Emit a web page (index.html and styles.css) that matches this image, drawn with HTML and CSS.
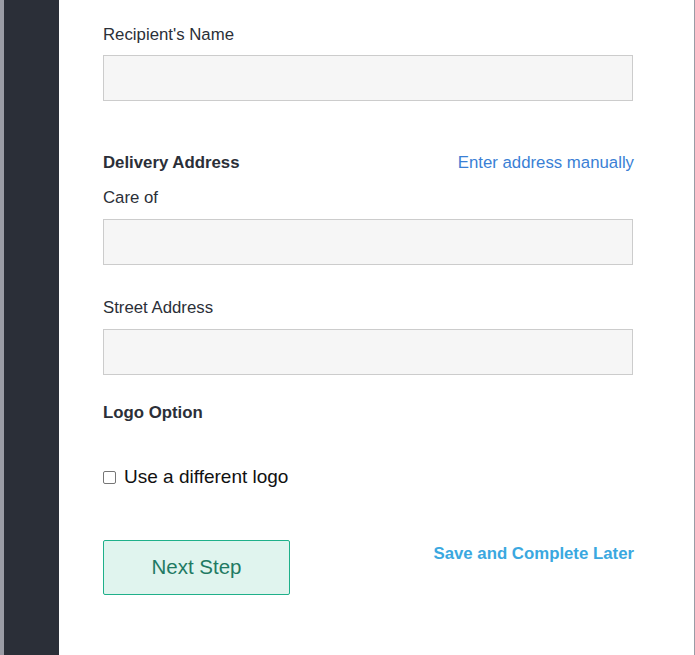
FILE: index.html
```html
<!DOCTYPE html>
<html>
<head>
<meta charset="utf-8">
<link rel="stylesheet" href="styles.css">
</head>
<body>
<div class="page">
  <div class="rail"></div>
  <div class="sidebar"></div>
  <main class="main">
    <form class="form">
      <label class="label lbl-name">Recipient's Name</label>
      <div class="input"></div>

      <div class="section-row">
        <span class="section-title">Delivery Address</span>
        <a class="link">Enter address manually</a>
      </div>
      <label class="label lbl-care">Care of</label>
      <div class="input"></div>

      <label class="label lbl-street">Street Address</label>
      <div class="input"></div>

      <div class="section-title logo-title">Logo Option</div>

      <label class="check-row">
        <span class="checkbox"></span>
        <span class="check-text">Use a different logo</span>
      </label>

      <div class="actions">
        <button type="button" class="btn-next">Next Step</button>
        <a class="save-link">Save and Complete Later</a>
      </div>
    </form>
  </main>
</div>
</body>
</html>
```
FILE: styles.css
```css
* { box-sizing: border-box; }
html, body { margin: 0; padding: 0; height: 100%; }
body {
  font-family: "Liberation Sans", Arial, sans-serif;
  color: #2b2f38;
  background: #fff;
}
.page {
  display: flex;
  height: 655px;
  border-right: 1px solid #9a9ca5;
}
.rail { width: 4px; background: #9a9ca5; }
.sidebar { width: 55px; background: #2b2f38; }
.main { flex: 1; padding-left: 44px; }
.form { width: 531px; display: flex; flex-direction: column; }
.label {
  display: block;
  font-size: 16.8px;
  line-height: 20px;
  padding-top: 1px;
  color: #2b2f38;
  margin-bottom: 10px;
}
.lbl-name { margin-top: 24px; }
.lbl-care { margin-top: 14px; }
.lbl-street { margin-top: 32px; }
.input {
  width: 530px;
  height: 46px;
  background: #f6f6f6;
  border: 1px solid #cccccc;
}
.lbl-care + .input, .lbl-street + .input { margin-top: 1px; }
.section-row {
  display: flex;
  justify-content: space-between;
  align-items: center;
  margin-top: 51px;
  padding-top: 1px;
  height: 21px;
}
.section-title {
  font-size: 16.8px;
  line-height: 20px;
  font-weight: bold;
  color: #2b2f38;
}
.link {
  font-size: 16.8px;
  line-height: 20px;
  color: #3a7fd5;
}
.logo-title { margin-top: 27px; padding-top: 1px; }
.check-row {
  display: flex;
  align-items: center;
  margin-top: 43px;
  height: 22px;
}
.checkbox {
  width: 13px;
  height: 13px;
  border: 1px solid #767676;
  border-radius: 2px;
  background: #fff;
  margin-right: 8px;
}
.check-text {
  font-size: 19px;
  line-height: 22px;
  color: #111;
}
.actions {
  display: flex;
  justify-content: space-between;
  align-items: flex-start;
  margin-top: 52px;
}
.btn-next {
  width: 187px;
  height: 55px;
  background: #e0f4ee;
  border: 1px solid #1fb08a;
  border-radius: 2px;
  color: #1f7a63;
  font-family: "Liberation Sans", Arial, sans-serif;
  font-size: 20.5px;
  padding: 0 0 2px 0;
}
.save-link {
  font-size: 16.8px;
  line-height: 20px;
  font-weight: bold;
  color: #3aa8e0;
  margin-top: 4px;
}
```
